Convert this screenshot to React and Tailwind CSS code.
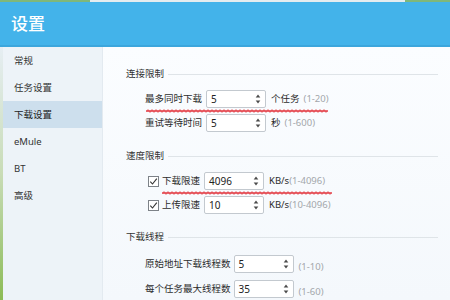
import React from "react";

function wave(len) {
  let d = "M1 2";
  for (let x = 0; x < len - 4; x += 4) d += " q1 -0.9 2 0 t2 0";
  return d;
}

function RedLine({ width, left = 0 }) {
  return (
    <svg
      className="absolute top-[18.5px] pointer-events-none"
      style={{ left }}
      width={width}
      height="4"
      viewBox={`0 0 ${width} 4`}
    >
      <path d={wave(width)} fill="none" stroke="#e2323b" strokeWidth="2.1" strokeLinecap="round" strokeOpacity="0.85" />
    </svg>
  );
}

function Spin({ value, w = "w-[60px]" }) {
  return (
    <div
      className={`h-[18px] ${w} bg-white border border-[#c3c9cf] rounded-[2px] flex items-center justify-between pl-[4px] pr-[4px] shrink-0`}
    >
      <span className="text-[10px] text-[#222] leading-none">{value}</span>
      <svg width="6" height="12" viewBox="0 0 6 12">
        <path d="M3 1.5 L5.3 4.6 H0.7Z" fill="#4a4a4a" />
        <path d="M3 10.5 L5.3 7.4 H0.7Z" fill="#4a4a4a" />
      </svg>
    </div>
  );
}

function Check() {
  return (
    <div className="w-[11px] h-[11px] border border-[#7d8288] bg-white flex items-center justify-center shrink-0">
      <svg width="9" height="9" viewBox="0 0 9 9">
        <path d="M1.3 4.6 L3.5 7 L7.8 1.6" fill="none" stroke="#333" strokeWidth="1.1" />
      </svg>
    </div>
  );
}

function Heading({ children, className = "" }) {
  return (
    <div className={`flex items-center h-[14px] pl-[23px] pr-[12px] ${className}`}>
      <span className="text-[9.5px] text-[#333] leading-none">{children}</span>
      <div className="flex-1 h-px bg-[#dfe4e8] ml-[4px]" />
    </div>
  );
}

function Hint({ children }) {
  return <span className="text-[9.5px] text-[#a3a7ab] leading-none">{children}</span>;
}

export default function App() {
  const items = ["常规", "任务设置", "下载设置", "eMule", "BT", "高级"];
  return (
    <div className="w-[450px] h-[300px] overflow-hidden flex flex-col bg-[#f4f8fc] font-['Noto_Sans','Noto_Sans_CJK_SC',sans-serif] text-[#2c2c2c]">
      <div className="h-[2px] flex shrink-0">
        <div className="w-[90px] bg-[#7fb77a]" />
        <div className="flex-1 bg-[#e4ecef]" />
        <div className="w-[45px] bg-[#7fb77a]" />
      </div>
      <div className="h-[45px] shrink-0 bg-[#43b3ea] border-b-2 border-[#3ca6dc] flex items-center pl-[11px]">
        <span className="text-[17px] text-white font-medium leading-none">设置</span>
      </div>
      <div className="flex flex-1 min-h-0">
        <div className="w-[3px] bg-gradient-to-b from-[#e6eef3] via-[#c9dcb6] to-[#8cbb55] shrink-0" />
        <div className="w-[100px] bg-[#edf3f8] border-r border-[#e3eaf0] shrink-0 flex flex-col">
          {items.map((t, i) => (
            <div
              key={t}
              className={`h-[27px] flex items-center pl-[11px] text-[9.5px] leading-none ${
                i === 2 ? "bg-[#cddfed] text-[#222]" : "text-[#333]"
              }`}
            >
              {t}
            </div>
          ))}
        </div>
        <div className="flex-1 flex flex-col bg-gradient-to-b from-[#fbfdff] to-[#f4f8fc] pt-[20px]">
          <Heading>连接限制</Heading>
          <div className="flex flex-col gap-[6px] mt-[9px] pl-[42px]">
            <div className="relative flex items-center h-[18px] gap-[4px]">
              <span className="text-[9.5px] leading-none">最多同时下载</span>
              <Spin value="5" />
              <span className="text-[9.5px] leading-none ml-[1px]">个任务</span>
              <Hint>(1-20)</Hint>
              <RedLine width={184} left={1} />
            </div>
            <div className="flex items-center h-[18px] gap-[4px]">
              <span className="text-[9.5px] leading-none">重试等待时间</span>
              <Spin value="5" />
              <span className="text-[9.5px] leading-none ml-[1px]">秒</span>
              <Hint>(1-600)</Hint>
            </div>
          </div>

          <Heading className="mt-[17px]">速度限制</Heading>
          <div className="flex flex-col gap-[6px] mt-[9px] pl-[45px]">
            <div className="flex items-center h-[18px]">
              <Check />
              <div className="relative flex items-center h-[18px] gap-[4px] ml-[3px]">
                <span className="text-[9.5px] leading-none">下载限速</span>
                <Spin value="4096" />
                <span className="text-[9.5px] leading-none ml-[1px]">
                  KB/s<Hint>(1-4096)</Hint>
                </span>
                <RedLine width={171} left={0} />
              </div>
            </div>
            <div className="flex items-center h-[18px]">
              <Check />
              <div className="flex items-center h-[18px] gap-[4px] ml-[3px]">
                <span className="text-[9.5px] leading-none">上传限速</span>
                <Spin value="10" />
                <span className="text-[9.5px] leading-none ml-[1px]">
                  KB/s<Hint>(10-4096)</Hint>
                </span>
              </div>
            </div>
          </div>

          <Heading className="mt-[16px]">下载线程</Heading>
          <div className="flex flex-col gap-[7px] mt-[11px] pl-[42px]">
            <div className="flex items-center h-[18px] gap-[3px]">
              <span className="text-[9.5px] leading-none">原始地址下载线程数</span>
              <Spin value="5" />
              <span className="ml-[2px]">
                <Hint>(1-10)</Hint>
              </span>
            </div>
            <div className="flex items-center h-[18px] gap-[3px]">
              <span className="text-[9.5px] leading-none">每个任务最大线程数</span>
              <Spin value="35" />
              <span className="ml-[2px]">
                <Hint>(1-60)</Hint>
              </span>
            </div>
          </div>
        </div>
      </div>
    </div>
  );
}
